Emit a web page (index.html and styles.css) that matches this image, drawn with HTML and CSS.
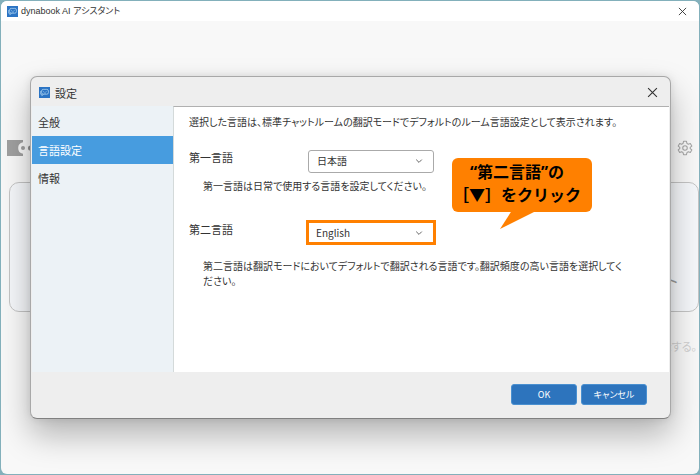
FILE: index.html
```html
<!DOCTYPE html>
<html lang="ja">
<head>
  <meta charset="UTF-8">
  <title>dynabook AI アシスタント</title>
  <link rel="stylesheet" href="styles.css">
</head>
<body>
<svg class="defs" width="0" height="0">
  <symbol id="app-icon" viewBox="0 0 11 11">
    <rect width="11" height="11" fill="#2b74c4"/>
    <rect x="2.6" y="2.4" width="6.8" height="4.8" rx="1.6" fill="none" stroke="#b9dcf5" stroke-width=".7"/>
    <path d="M1.6 4v3.2h1.6M2.8 7.2v1.6l1.8-1.4M4.6 4.2v.9M7.2 4.2v.9M4.8 6h2.2" fill="none" stroke="#b9dcf5" stroke-width=".6"/>
  </symbol>
  <symbol id="cross" viewBox="0 0 10 10">
    <path d="M1 1l8 8M9 1l-8 8" fill="none" stroke="#333" stroke-width="1"/>
  </symbol>
  <symbol id="chevron" viewBox="0 0 8 8">
    <path d="M1.2 2.6L4 5.4l2.8-2.8" fill="none" stroke="#666" stroke-width="1"/>
  </symbol>
</svg>
<div class="window">
  <header class="titlebar">
    <svg class="app-icon"><use href="#app-icon"/></svg>
    <h1 class="app-name">dynabook AI アシスタント</h1>
    <button class="close" aria-label="閉じる"><svg class="cross-small"><use href="#cross"/></svg></button>
  </header>
  <main class="app">
    <div class="toolbar">
      <svg class="logo" viewBox="0 0 26 16">
        <path d="M0 0h16v2.2a5.9 5.9 0 0 0 0 11.6V16H0z" fill="#a0a0a0"/>
        <circle cx="16" cy="8" r="2" fill="#a0a0a0"/>
        <circle cx="23.6" cy="8" r="2.6" fill="#909090"/>
      </svg>
      <button class="gear" aria-label="設定">
        <svg viewBox="0 0 24 24" width="16" height="16" fill="none" stroke="#a6a6a6" stroke-width="1.6" stroke-linejoin="round">
          <circle cx="12" cy="12" r="3.4"/>
          <path d="M9.8 2h4.4l.7 3.1 2 1.2 3.1-1 2.2 3.8-2.4 2.1v1.6l2.4 2.1-2.2 3.8-3.1-1-2 1.2-.7 3.1H9.8l-.7-3.1-2-1.2-3.1 1-2.2-3.8 2.4-2.1v-1.6L1.8 9.1 4 5.3l3.1 1 2-1.2z"/>
        </svg>
      </button>
    </div>
    <div class="card">ト</div>
    <p class="hint">示する。</p>
  </main>

  <section class="dialog" role="dialog" aria-labelledby="dialog-title">
    <header class="dialog-head">
      <svg class="app-icon"><use href="#app-icon"/></svg>
      <h2 class="dialog-title" id="dialog-title">設定</h2>
      <button class="close" aria-label="閉じる"><svg class="cross"><use href="#cross"/></svg></button>
    </header>
    <div class="dialog-body">
      <nav class="sidebar">
        <a class="item" href="#general">全般</a>
        <a class="item active" href="#language">言語設定</a>
        <a class="item" href="#info">情報</a>
      </nav>
      <div class="content">
        <p class="lead">選択した言語は、標準チャットルームの翻訳モードでデフォルトのルーム言語設定として表示されます。</p>
        <div class="field">
          <label for="first-lang">第一言語</label>
          <div class="select">
            <select id="first-lang"><option>日本語</option></select>
            <svg class="chevron"><use href="#chevron"/></svg>
          </div>
        </div>
        <p class="note">第一言語は日常で使用する言語を設定してください。</p>
        <div class="field second">
          <label for="second-lang">第二言語</label>
          <div class="select marked">
            <select id="second-lang"><option>English</option></select>
            <svg class="chevron"><use href="#chevron"/></svg>
          </div>
        </div>
        <p class="note">第二言語は翻訳モードにおいてデフォルトで翻訳される言語です。翻訳頻度の高い言語を選択してください。</p>
        <div class="callout">
          <div>“第二言語”の</div>
          <div>［▼］をクリック</div>
        </div>
      </div>
    </div>
    <footer class="dialog-foot">
      <button class="btn">OK</button>
      <button class="btn">キャンセル</button>
    </footer>
  </section>
</div>
</body>
</html>
```
FILE: styles.css
```css
* {box-sizing: border-box;}
body {
  margin: 0;
  padding: 1px;
  height: 100vh;
  background: #83b0bb;
  color: #333;
  font-family: "Noto Sans CJK JP", sans-serif;
  font-size: 11px;
  line-height: 16px;
  font-feature-settings: "palt";
}
h1, h2, p {margin: 0; font-size: 11px; font-weight: normal;}
button, select {font: inherit; font-feature-settings: inherit; color: inherit;}
svg {display: block; flex: none;}
.defs {position: absolute;}

/* main window */
.window {position: relative; height: 100%; background: #f8f8f8; border-radius: 6px; overflow: hidden;}
.titlebar {display: flex; align-items: center; gap: 3px; height: 20px; padding: 0 12px 0 6px; background: #fff;}
.app-icon {width: 11px; height: 11px;}
.app-name {font-family: "Liberation Sans", "Noto Sans CJK JP", sans-serif; font-size: 9px;}
.close {display: flex; margin-left: auto; padding: 0; border: 0; background: none;}
.cross-small {width: 9px; height: 9px;}
.cross {width: 11px; height: 11px;}
.toolbar {display: flex; justify-content: space-between; align-items: center; padding: 119px 6px 0;}
.logo {width: 26px; height: 16px;}
.gear {padding: 0; border: 0; background: none;}
.card {
  display: flex;
  justify-content: flex-end;
  align-items: center;
  height: 130px;
  margin: 26px 0 0 8px;
  padding: 66px 20px 0 0;
  border: 1px solid #c4c4c4;
  border-radius: 10px;
  background: #f5f7fa;
  color: #999;
  font-size: 16px;
}
.hint {margin-top: 26px; padding-right: 2px; color: #d0d0d0; text-align: right;}

/* settings dialog */
.dialog {
  position: absolute;
  top: 75px;
  left: 29px;
  right: 28px;
  border: 1px solid #a8a8a8;
  border-bottom-color: #808080;
  border-radius: 7px;
  background: #eee;
  box-shadow: 0 16px 32px rgba(0, 0, 0, .28), 0 0 8px rgba(0, 0, 0, .1);
}
.dialog-head {display: flex; align-items: center; gap: 5px; height: 29px; padding: 2px 12px 0 8px;}
.dialog-body {display: grid; grid-template-columns: 141px 1fr; min-height: 266px; padding: 0 1px;}
.sidebar {padding-top: 2px; background: #ecf2f6;}
.item {display: block; padding: 6px; color: #333; text-decoration: none;}
.item.active {background: #479cdf; color: #fff;}
.content {position: relative; padding: 7px 42px 0 15px; border-top: 1px solid #b0b0b0; border-left: 1px solid #d4dada; background: #fff;}
.lead, .note {font-size: 10px;}
.field {display: grid; grid-template-columns: 116px 132px; align-items: center; margin-top: 19px;}
.field label {padding-bottom: 8px;}
.select {display: grid; grid-template-columns: 1fr 20px; align-items: center; border: 1px solid #aaa; border-radius: 3px; margin: 0 3px;}
.select select {grid-area: 1 / 1 / 2 / 3; height: 21px; padding: 0 8px; border: 0; background: none; appearance: none; font-size: 10px;}
.chevron {grid-area: 1 / 2; width: 8px; height: 8px; margin-left: 2px; pointer-events: none;}
.marked {margin: 0 1px; border: 3px solid #ff8000; border-radius: 0;}
.marked select {height: 19px; padding: 0 7px;}
.note {margin-top: 5px; padding-left: 14px;}
.second {margin-top: 26px;}
.second + .note {margin-top: 13px; line-height: 15px;}

.callout {
  position: absolute;
  top: 51px;
  left: 278px;
  width: 140px;
  padding: 3px 10px 5px 0;
  border-radius: 6px;
  background: #ff8000;
  color: #000;
  font-family: "Open Sans", "Noto Sans CJK JP", sans-serif;
  font-size: 16px;
  font-weight: bold;
  line-height: 23px;
  text-align: center;
  white-space: nowrap;
  font-feature-settings: normal;
}
.callout::after {
  content: "";
  position: absolute;
  top: 100%;
  left: 48px;
  width: 34px;
  height: 17px;
  background: #ff8000;
  clip-path: polygon(32% 0, 100% 0, 0 100%);
}

.dialog-foot {display: flex; justify-content: flex-end; gap: 4px; padding: 12px 23px 13px;}
.btn {width: 66px; height: 21px; padding: 0; border: 1px solid #4a90d0; border-radius: 3px; background: #2d74bd; color: #fff; font-size: 9px;}
```
